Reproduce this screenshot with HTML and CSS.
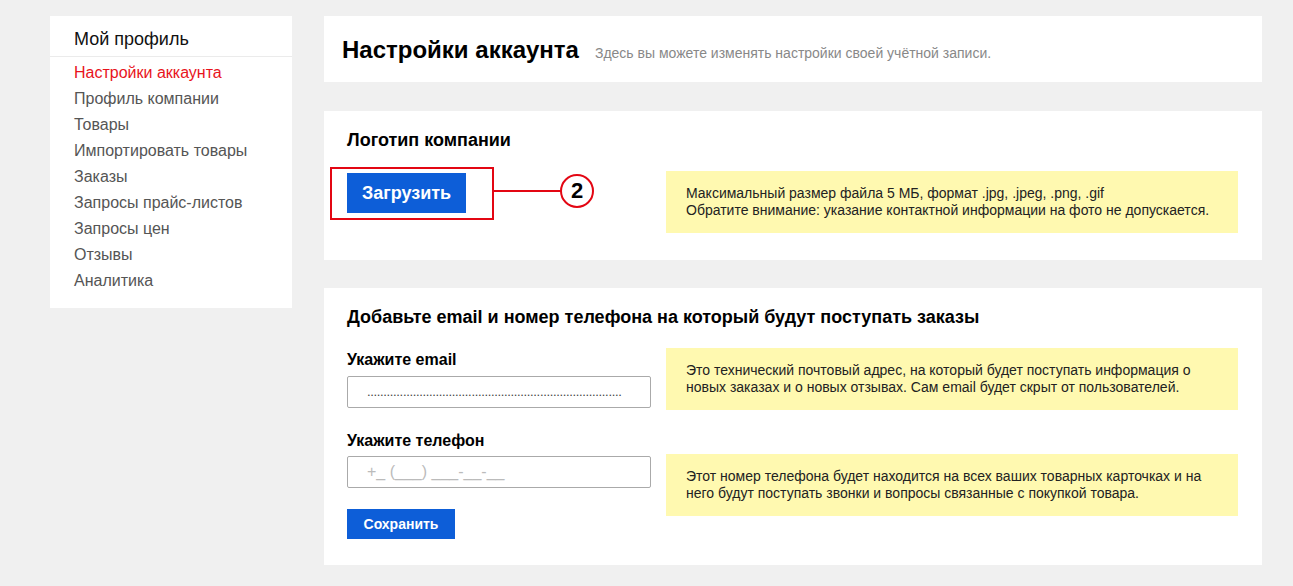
FILE: index.html
```html
<!DOCTYPE html>
<html lang="ru">
<head>
<meta charset="utf-8">
<title>Настройки аккаунта</title>
<link rel="stylesheet" href="styles.css">
</head>
<body>
<div class="page">
  <aside class="sidebar">
    <div class="side-head">Мой профиль</div>
    <ul class="menu">
      <li class="active">Настройки аккаунта</li>
      <li>Профиль компании</li>
      <li>Товары</li>
      <li>Импортировать товары</li>
      <li>Заказы</li>
      <li>Запросы прайс-листов</li>
      <li>Запросы цен</li>
      <li>Отзывы</li>
      <li>Аналитика</li>
    </ul>
  </aside>
  <main class="main">
    <section class="card card-head">
      <h1 class="page-title">Настройки аккаунта</h1>
      <span class="page-sub">Здесь вы можете изменять настройки своей учётной записи.</span>
    </section>

    <section class="card card-logo">
      <h2 class="card-title">Логотип компании</h2>
      <div class="row row-logo">
        <div class="col-left">
          <div class="btn-wrap">
            <button class="btn btn-upload">Загрузить</button>
            <span class="anno-frame"></span>
            <span class="anno-line"></span>
            <span class="anno-num">2</span>
          </div>
        </div>
        <div class="note">Максимальный размер файла 5 МБ, формат .jpg, .jpeg, .png, .gif<br>Обратите внимание: указание контактной информации на фото не допускается.</div>
      </div>
    </section>

    <section class="card card-contacts">
      <h2 class="card-title">Добавьте email и номер телефона на который будут поступать заказы</h2>
      <div class="row row-email">
        <div class="col-left">
          <label class="field-label">Укажите email</label>
          <div class="input input-dots">..............................................................................</div>
        </div>
        <div class="note">Это технический почтовый адрес, на который будет поступать информация о<br>новых заказах и о новых отзывах. Сам email будет скрыт от пользователей.</div>
      </div>
      <div class="row row-phone">
        <div class="col-left">
          <label class="field-label">Укажите телефон</label>
          <div class="input input-phone">+_ (___) ___-__-__</div>
          <button class="btn btn-save">Сохранить</button>
        </div>
        <div class="note note-phone">Этот номер телефона будет находится на всех ваших товарных карточках и на<br>него будут поступать звонки и вопросы связанные с покупкой товара.</div>
      </div>
    </section>
  </main>
</div>
</body>
</html>
```

FILE: styles.css
```css
* { box-sizing: border-box; }
html, body {
  margin: 0;
  padding: 0;
  background: #f0f0f0;
  font-family: "Liberation Sans", Arial, sans-serif;
  color: #000;
}
.page {
  display: flex;
  align-items: flex-start;
  gap: 32px;
  padding: 16px 0 0 50px;
}
.sidebar {
  width: 242px;
  background: #fff;
  padding-bottom: 14px;
}
.side-head {
  font-size: 18px;
  line-height: 22px;
  padding: 12px 24px 6px;
  border-bottom: 1px solid #ebebeb;
  color: #111;
}
.menu {
  list-style: none;
  margin: 3px 0 0;
  padding: 0 24px;
}
.menu li {
  font-size: 16px;
  line-height: 26px;
  color: #555;
}
.menu li.active { color: #e8141c; }

.main {
  width: 938px;
  display: flex;
  flex-direction: column;
  gap: 29px;
}
.card { background: #fff; }
.card-head {
  height: 66px;
  display: flex;
  align-items: baseline;
  padding: 20px 18px 0;
  gap: 16px;
}
.page-title {
  margin: 0;
  font-size: 24px;
  font-weight: bold;
  line-height: 28px;
}
.page-sub {
  font-size: 14px;
  color: #888;
}
.card-logo { padding: 19px 24px 27px 23px; }
.card-contacts { padding: 19px 24px 26px 23px; margin-top: -1px; }
.card-title {
  margin: 0;
  font-size: 18px;
  line-height: 20px;
  font-weight: bold;
}
.row {
  display: flex;
  gap: 15px;
}
.row-logo { margin-top: 21px; align-items: flex-start; }
.row-email { margin-top: 21px; align-items: center; }
.row-phone { margin-top: 21px; align-items: flex-start; }
.col-left {
  width: 304px;
  flex: none;
  display: flex;
  flex-direction: column;
  align-items: flex-start;
}
.note {
  flex: 1;
  background: #fff9b0;
  font-size: 14px;
  line-height: 17px;
  color: #222;
  padding: 14px 20px;
  min-height: 62px;
  white-space: nowrap;
}
.note-phone { margin-top: 23px; }
.btn {
  border: none;
  background: #0d5ed8;
  color: #fff;
  font-family: "Liberation Sans", Arial, sans-serif;
  font-weight: bold;
  cursor: pointer;
}
.btn-upload {
  margin-top: 2px;
  width: 119px;
  height: 40px;
  font-size: 18px;
}
.btn-save {
  margin-top: 21px;
  width: 108px;
  height: 30px;
  font-size: 14px;
}
.btn-wrap { position: relative; }
.anno-frame {
  position: absolute;
  left: -17px;
  top: -4px;
  width: 164px;
  height: 53px;
  border: 2px solid #e30613;
}
.anno-line {
  position: absolute;
  left: 147px;
  top: 19px;
  width: 67px;
  height: 2px;
  background: #e30613;
}
.anno-num {
  position: absolute;
  left: 213px;
  top: 3px;
  width: 34px;
  height: 34px;
  border: 2px solid #e30613;
  border-radius: 50%;
  background: #fff;
  font-size: 22px;
  font-weight: bold;
  line-height: 30px;
  text-align: center;
  color: #000;
}
.field-label {
  font-size: 16px;
  font-weight: bold;
  line-height: 20px;
  margin-bottom: 6px;
}
.input {
  width: 304px;
  height: 32px;
  border: 1px solid #aaa;
  border-radius: 2px;
  padding: 0 19px;
  font-size: 14px;
  line-height: 30px;
  overflow: hidden;
  white-space: nowrap;
}
.input-dots { color: #444; font-size: 13px; letter-spacing: -0.35px; }
.input-phone { color: #bbb; font-size: 16px; }
.row-phone .field-label { margin-bottom: 5px; }
```
